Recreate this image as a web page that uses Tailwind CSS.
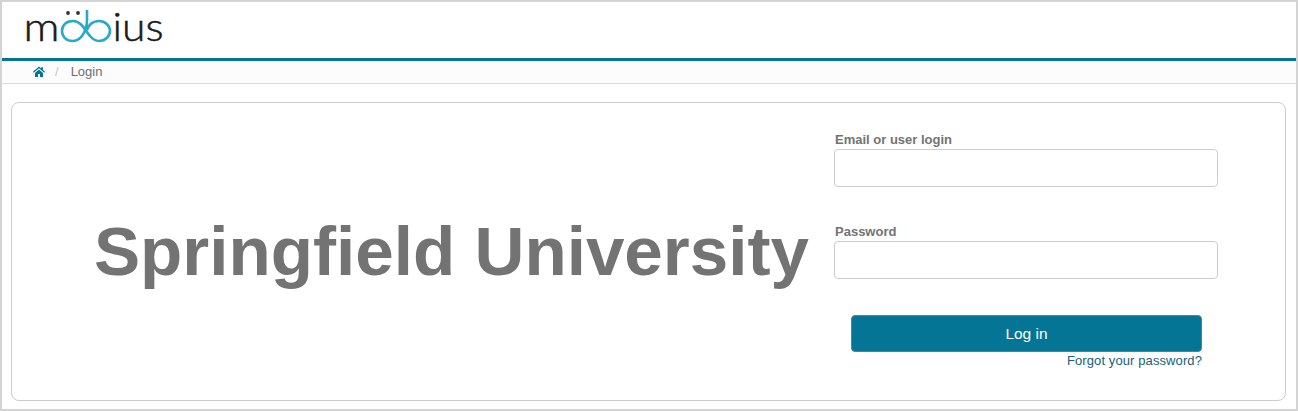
<!DOCTYPE html>
<html lang="en">
<head>
    <meta charset="UTF-8">
    <title>Login - Möbius</title>
    <script src="https://cdn.jsdelivr.net/npm/@tailwindcss/browser@4"></script>
</head>
<body class="bg-white font-['Liberation_Sans',Arial,sans-serif]">
    <div class="h-[411px] w-[1298px] border-2 border-[#d4d4d4] overflow-hidden">
        <!-- Logo -->
        <header class="h-[56px] bg-white">
            <svg width="170" height="50" viewBox="0 0 170 50" class="block overflow-visible" xmlns="http://www.w3.org/2000/svg">
                <text x="21.500" y="39" font-family="Lato, sans-serif" font-weight="300" font-size="40" textLength="36" lengthAdjust="spacingAndGlyphs" fill="#1a1a1a" stroke="#1a1a1a" stroke-width="0.500">m</text>
                <circle cx="66" cy="11" r="1.9" fill="#333"/>
                <circle cx="76" cy="11" r="1.9" fill="#333"/>
                <path d="M85 8 V18 C85 27 80 39 71 39 C64 39 60 34.500 60 29 C60 23.500 64 19 71 19 C80 19 84 30 88 34 C91 37.500 94 39 97 39 C103 39 108 34.500 108 29 C108 23.500 103 19 97 19 C91 19 86 23 85 28" fill="none" stroke="#27a9c9" stroke-width="2.600"/>
                <text x="110.500" y="39" font-family="Lato, sans-serif" font-weight="300" font-size="40" textLength="51" lengthAdjust="spacingAndGlyphs" fill="#1a1a1a" stroke="#1a1a1a" stroke-width="0.500">ius</text>
            </svg>
        </header>
        <div class="h-[3px] bg-[#047595]"></div>
        <!-- Breadcrumb -->
        <nav class="h-[23px] bg-[#fcfcfc] border-b border-[#dddddd] flex items-center pl-[31px] pb-px text-[13px] text-[#6f6f6f]">
            <svg width="12" height="11" viewBox="0 0 24 22" class="block" xmlns="http://www.w3.org/2000/svg">
                <path fill="#047595" d="M12 1 0 11.500l1.500 1.800L12 4.500l10.500 8.800L24 11.500 20 8V2.500h-3.500v2.600zM4 14v8h6v-6h4v6h6v-8l-8-6.800z"/>
            </svg>
            <span class="ml-[10px] text-[#c4c4c4]">/</span>
            <span class="ml-[12px]">Login</span>
        </nav>
        <!-- Login card -->
        <main class="mt-[18px] ml-[9px] w-[1275px] h-[299px] border border-[#cccccc] rounded-[8px] flex">
            <div class="w-[822px] flex items-center justify-end pr-[25px]">
                <h1 class="text-[69.2px] leading-none font-bold text-[#737373] whitespace-nowrap">Springfield University</h1>
            </div>
            <form class="w-[384px] pt-[28px]">
                <label class="block mb-px pl-px text-[13px] leading-[17px] font-bold text-[#737373]">Email or user login</label>
                <input type="text" class="block w-full h-[38px] bg-white border border-[#cccccc] rounded-[4px]">
                <label class="block mt-[36px] mb-px pl-px text-[13px] leading-[17px] font-bold text-[#737373]">Password</label>
                <input type="password" class="block w-full h-[38px] bg-white border border-[#cccccc] rounded-[4px]">
                <div class="ml-[17px] mr-[16px] mt-[36px]">
                    <button type="button" class="block w-full h-[37px] pt-px bg-[#047595] border border-[#5f7f8c] rounded-[4px] text-white text-[15.500px]">Log in</button>
                    <a href="#" class="block text-right text-[13px] tracking-[0.1px] leading-[17px] text-[#16627a]">Forgot your password?</a>
                </div>
            </form>
        </main>
    </div>
</body>
</html>
